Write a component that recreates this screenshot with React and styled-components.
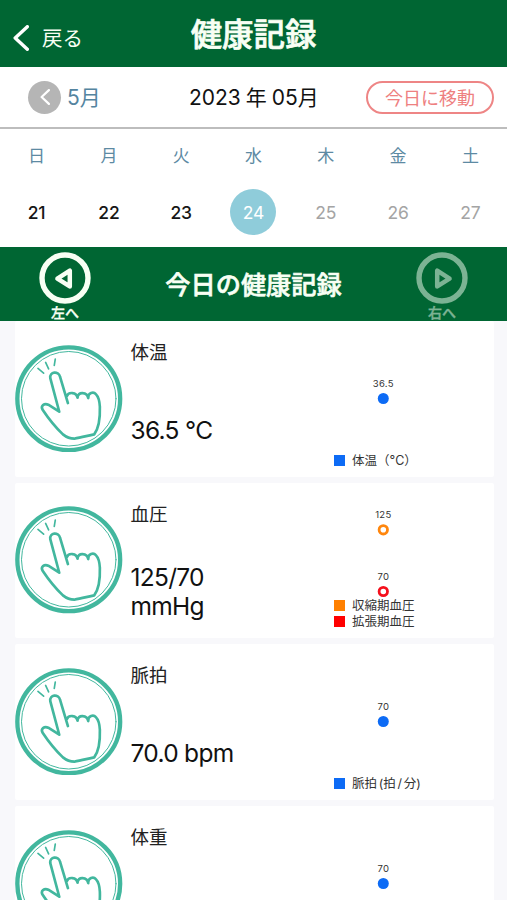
import React from "react";
import styled, { createGlobalStyle } from "styled-components";

const GREEN = "#006633";
const TEAL = "#42b79e";

const GlobalStyle = createGlobalStyle`
  * { box-sizing: border-box; }
  body { margin: 0; background: #f8f8fb; overflow: hidden; }
  button { font: inherit; border: 0; padding: 0; background: none; color: inherit; }
`;

const Screen = styled.div`
  width: 507px;
  height: 900px;
  overflow: hidden;
  display: flex;
  flex-direction: column;
  font-family: Inter, "Noto Sans CJK JP", sans-serif;
  color: #111;
  white-space: nowrap;
`;

const Header = styled.header`
  display: grid;
  grid-template-columns: 120px 1fr 120px;
  align-items: center;
  height: 67px;
  flex: none;
  background: ${GREEN};
  color: #f8fff4;
`;

const BackButton = styled.button`
  display: flex;
  align-items: center;
  gap: 13px;
  padding: 9px 0 0 13px;
  font-size: 20.5px;
  line-height: 28px;
`;

const BackText = styled.span`
  padding-top: 2px;
`;

const Title = styled.h1`
  margin: 3px 0 0;
  text-align: center;
  font-size: 31.4px;
  line-height: 44px;
  font-weight: 500;
  -webkit-text-stroke: 0.7px currentColor;
`;

const MonthBar = styled.div`
  display: grid;
  grid-template-columns: 160px 1fr 160px;
  align-items: center;
  height: 62px;
  flex: none;
  padding: 0 13px 0 28px;
  background: #fff;
  border-bottom: 2px solid #bdbdbd;
`;

const PrevMonth = styled.button`
  display: flex;
  align-items: center;
  gap: 6px;
  color: #5484a0;
  font-size: 21px;
  line-height: 28px;
`;

const PrevText = styled.span`
  padding-top: 2px;
`;

const PrevDisc = styled.span`
  display: flex;
  align-items: center;
  justify-content: center;
  width: 33px;
  height: 33px;
  border-radius: 50%;
  background: #b5b5b5;
`;

const MonthLabel = styled.div`
  display: flex;
  gap: 5px;
  align-items: baseline;
  padding: 2px 0 0 1px;
  font-size: 21px;
  line-height: 30px;
`;

const TodayButton = styled.button`
  justify-self: end;
  width: 128px;
  height: 33px;
  padding-top: 2px;
  border: 2px solid #ee8585;
  border-radius: 17px;
  color: #ee8080;
  font-size: 18px;
  line-height: 27px;
`;

const Calendar = styled.div`
  display: grid;
  grid-template-columns: repeat(7, 72.3px);
  grid-template-rows: 54px 64px;
  justify-content: center;
  align-items: center;
  justify-items: center;
  height: 118px;
  flex: none;
  background: #fff;
`;

const Weekday = styled.span`
  color: #5d8aa3;
  font-size: 17px;
  line-height: 24px;
`;

const Day = styled.span`
  display: flex;
  align-items: center;
  justify-content: center;
  width: 46px;
  height: 46px;
  margin-bottom: 6px;
  border-radius: 50%;
  font-size: 17.5px;
  letter-spacing: -0.2px;
  font-weight: ${(p) => (p.$state === "past" ? 500 : 400)};
  background: ${(p) => (p.$state === "selected" ? "#8fccda" : "transparent")};
  color: ${(p) => ({ selected: "#fff", future: "#a4a4a4", past: "#161616" })[p.$state]};
`;

const Banner = styled.section`
  display: grid;
  grid-template-columns: 130px 1fr 130px;
  height: 74px;
  flex: none;
  overflow: hidden;
  background: ${GREEN};
  color: #f8fff4;
`;

const BannerTitle = styled.h2`
  margin: 0;
  padding-top: 1px;
  text-align: center;
  font-size: 25.2px;
  line-height: 74px;
  font-weight: 500;
  -webkit-text-stroke: 0.6px currentColor;
`;

const NavButton = styled.button`
  display: flex;
  flex-direction: column;
  align-items: center;
  padding-top: 5px;
  opacity: ${(p) => (p.$dim ? 0.5 : 1)};
  font-size: 14px;
  line-height: 18px;
  font-weight: 500;
  -webkit-text-stroke: 0.3px currentColor;

  svg { display: block; flex: none; }
`;

const Records = styled.main`
  display: flex;
  flex-direction: column;
  gap: 6px;
  padding: 0 13px 0 15px;
`;

const Card = styled.article`
  display: grid;
  grid-template-columns: 115.5px 139.5px 1fr;
  height: 155.7px;
  flex: none;
  background: #fff;
  border-radius: 2px;
`;

const TapIcon = styled.svg`
  display: block;
  width: 107.5px;
  height: 107.5px;
  margin-top: 23.5px;
`;

const Reading = styled.div`
  display: flex;
  flex-direction: column;
  padding-top: 17px;
`;

const ReadingName = styled.h3`
  margin: 0;
  font-size: 18.5px;
  line-height: 28px;
  font-weight: 400;
  color: #222;
`;

const ReadingValue = styled.div`
  display: flex;
  flex-direction: column;
  justify-content: center;
  height: 128px;
  font-size: 24.5px;
  letter-spacing: -0.7px;
  line-height: 29px;
`;

const ChartPanel = styled.div`
  display: flex;
  flex-direction: column;
  justify-content: space-between;
  height: 155.7px;
  padding-bottom: 8.3px;
`;

const Plot = styled.svg`
  display: block;
  width: 224px;
  height: 115px;
  flex: none;
`;

const PlotLabel = styled.text`
  font-size: 9.5px;
  letter-spacing: 0.3px;
  fill: #333;
  text-anchor: middle;
`;

const Legend = styled.div`
  display: flex;
  flex-direction: column;
  padding-left: 64px;
`;

const LegendItem = styled.div`
  display: flex;
  align-items: center;
  gap: 7px;
  height: 16.2px;
  font-size: 12.5px;
  line-height: 16px;
  color: #333;
`;

const Swatch = styled.span`
  width: 11px;
  height: 11px;
  background: ${(p) => p.$color};
`;

const LegendText = styled.span`
  padding-top: 1px;
  word-spacing: -1.8px;
`;

const Chevron = ({ w, h, stroke }) => (
  <svg width={w} height={h} viewBox={`0 0 ${w} ${h}`} fill="none">
    <path
      d={`M${w - stroke / 2} ${stroke / 2}L${stroke / 2 + 0.5} ${h / 2}L${w - stroke / 2} ${h - stroke / 2}`}
      stroke="#fff"
      strokeWidth={stroke}
      strokeLinecap="round"
      strokeLinejoin="round"
    />
  </svg>
);

const NavCircle = ({ flip }) => (
  <svg width="52" height="52" viewBox="-26 -26 52 52" fill="none" stroke="#f8fff4">
    <circle r="23" strokeWidth="5.4" />
    <path
      d="M-7.6 0.6L4.8 -7.4V8.4Z"
      strokeWidth="4.5"
      strokeLinejoin="round"
      transform={flip ? "scale(-1 1)" : undefined}
    />
  </svg>
);

const TapHand = () => (
  <TapIcon viewBox="30 27.5 323 323" fill="none" stroke={TEAL} strokeLinecap="round" strokeLinejoin="round">
    <circle cx="191.5" cy="189" r="154.5" strokeWidth="13" />
    <circle cx="191.5" cy="189" r="142" strokeWidth="3" />
    <g strokeWidth="8">
      <path d="M189 202L165 122C161 105 133 107 136 127L163 228L130 207C118 201 106 211 113 222C133 252 153 276 174 296C184 304 196 309 208 309C230 304 250 300 268 296C280 280 286 245 285 213C284 195 279 181 273 175C266 167 249 170 250 187C247 169 218 166 218 186C215 168 190 168 186 181" />
    </g>
    <path d="M99 98L116 112M122 80L131 99M151 70L148 89" strokeWidth="5" />
  </TapIcon>
);

const DAYS = [
  ["日", 21, "past"],
  ["月", 22, "past"],
  ["火", 23, "past"],
  ["水", 24, "selected"],
  ["木", 25, "future"],
  ["金", 26, "future"],
  ["土", 27, "future"],
];

const BLUE = "#0d6bf5";
const ORANGE = "#ff860d";
const RED = "#f5101c";

const RECORDS = [
  {
    name: "体温",
    value: ["36.5 °C"],
    points: [{ y: 77.5, label: "36.5", color: BLUE }],
    legend: [{ color: BLUE, text: "体温（°C）" }],
  },
  {
    name: "血圧",
    value: ["125/70", "mmHg"],
    points: [
      { y: 46.8, label: "125", color: ORANGE, hollow: true },
      { y: 108.5, label: "70", color: RED, hollow: true },
    ],
    legend: [
      { color: "#ff8000", text: "収縮期血圧" },
      { color: "#ff0000", text: "拡張期血圧" },
    ],
  },
  {
    name: "脈拍",
    value: ["70.0 bpm"],
    points: [{ y: 77.5, label: "70", color: BLUE }],
    legend: [{ color: BLUE, text: "脈拍 (拍 / 分)" }],
  },
  {
    name: "体重",
    value: [],
    points: [{ y: 77.5, label: "70", color: BLUE }],
    legend: [],
  },
];

const RecordCard = ({ record }) => (
  <Card>
    <TapHand />
    <Reading>
      <ReadingName>{record.name}</ReadingName>
      <ReadingValue>
        {record.value.map((line) => (
          <span key={line}>{line}</span>
        ))}
      </ReadingValue>
    </Reading>
    <ChartPanel>
      <Plot viewBox="0 0 224 115">
        {record.points.map((p) => (
          <g key={p.label}>
            <PlotLabel x="113.3" y={p.y - 11.5}>{p.label}</PlotLabel>
            {p.hollow ? (
              <circle cx="113.3" cy={p.y} r="4.2" fill="#fff" stroke={p.color} strokeWidth="2.8" />
            ) : (
              <circle cx="113.3" cy={p.y} r="5.5" fill={p.color} />
            )}
          </g>
        ))}
      </Plot>
      <Legend>
        {record.legend.map((l) => (
          <LegendItem key={l.text}>
            <Swatch $color={l.color} />
            <LegendText>{l.text}</LegendText>
          </LegendItem>
        ))}
      </Legend>
    </ChartPanel>
  </Card>
);

export default function App() {
  return (
    <Screen lang="ja">
      <GlobalStyle />
      <Header>
        <BackButton>
          <Chevron w={16} h={26} stroke={3.4} />
          <BackText>戻る</BackText>
        </BackButton>
        <Title>健康記録</Title>
      </Header>
      <MonthBar>
        <PrevMonth>
          <PrevDisc>
            <Chevron w={10} h={16} stroke={2.2} />
          </PrevDisc>
          <PrevText>5月</PrevText>
        </PrevMonth>
        <MonthLabel>
          <span>2023</span>
          <span>年</span>
          <span>05月</span>
        </MonthLabel>
        <TodayButton>今日に移動</TodayButton>
      </MonthBar>
      <Calendar>
        {DAYS.map(([name]) => (
          <Weekday key={name}>{name}</Weekday>
        ))}
        {DAYS.map(([, day, state]) => (
          <Day key={day} $state={state}>{day}</Day>
        ))}
      </Calendar>
      <Banner>
        <NavButton>
          <NavCircle />
          左へ
        </NavButton>
        <BannerTitle>今日の健康記録</BannerTitle>
        <NavButton $dim>
          <NavCircle flip />
          右へ
        </NavButton>
      </Banner>
      <Records>
        {RECORDS.map((record) => (
          <RecordCard key={record.name} record={record} />
        ))}
      </Records>
    </Screen>
  );
}
